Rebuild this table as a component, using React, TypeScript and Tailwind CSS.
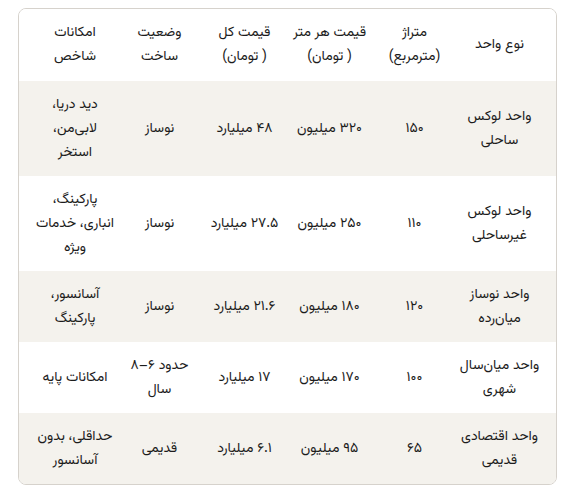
const headers = [
  "نوع واحد",
  "متراژ\n(مترمربع)",
  "قیمت هر متر\n( تومان)",
  "قیمت کل\n( تومان)",
  "وضعیت\nساخت",
  "امکانات\nشاخص",
];

const rows = [
  ["واحد لوکس\nساحلی", "۱۵۰", "۳۲۰ میلیون", "۴۸ میلیارد", "نوساز", "دید دریا،\nلابی‌من،\nاستخر"],
  ["واحد لوکس\nغیرساحلی", "۱۱۰", "۲۵۰ میلیون", "۲۷.۵ میلیارد", "نوساز", "پارکینگ،\nانباری، خدمات\nویژه"],
  ["واحد نوساز\nمیان‌رده", "۱۲۰", "۱۸۰ میلیون", "۲۱.۶ میلیارد", "نوساز", "آسانسور،\nپارکینگ"],
  ["واحد میان‌سال\nشهری", "۱۰۰", "۱۷۰ میلیون", "۱۷ میلیارد", "حدود ۶–۸\nسال", "امکانات پایه"],
  ["واحد اقتصادی\nقدیمی", "۶۵", "۹۵ میلیون", "۶.۱ میلیارد", "قدیمی", "حداقلی، بدون\nآسانسور"],
];

export default function App() {
  return (
    <div
      dir="rtl"
      className="bg-white pt-2 pb-2 px-[18px] text-[#1c1c1c]"
      style={{ fontFamily: '"Vazirmatn", "Noto Sans Arabic", "DejaVu Sans", sans-serif' }}
    >
      {/* TABLE CARD */}
      <div className="border border-[#d6d2cc] rounded-lg overflow-hidden">
        <table className="w-full table-fixed border-collapse text-[14px] leading-6">
          <colgroup>
            <col className="w-[99px]" />
            <col className="w-[85px]" />
            <col className="w-[85px]" />
            <col className="w-[85px]" />
            <col className="w-[85px]" />
            <col className="w-[98px]" />
          </colgroup>
          <thead>
            <tr className="bg-white">
              {headers.map((h, i) => (
                <th
                  key={i}
                  className={
                    "py-3 font-normal text-center align-middle whitespace-pre-line " +
                    (i === 0 ? "pr-[14px]" : i === 5 ? "pl-[14px]" : "")
                  }
                >
                  {h}
                </th>
              ))}
            </tr>
          </thead>
          <tbody>
            {rows.map((r, ri) => (
              <tr key={ri} className={ri % 2 === 0 ? "bg-[#f4f2ed]" : "bg-white"}>
                {r.map((c, ci) => (
                  <td
                    key={ci}
                    className={
                      "py-[11.5px] text-center align-middle whitespace-pre-line " +
                      (ci === 0 ? "pr-[14px]" : ci === 5 ? "pl-[14px]" : "")
                    }
                  >
                    {c}
                  </td>
                ))}
              </tr>
            ))}
          </tbody>
        </table>
      </div>
    </div>
  );
}
